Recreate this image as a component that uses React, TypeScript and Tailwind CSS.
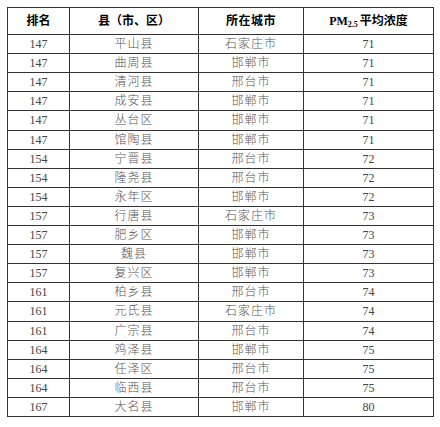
import React from "react";

const rows: [string, string, string, string][] = [
  ["147", "平山县", "石家庄市", "71"],
  ["147", "曲周县", "邯郸市", "71"],
  ["147", "清河县", "邢台市", "71"],
  ["147", "成安县", "邯郸市", "71"],
  ["147", "丛台区", "邯郸市", "71"],
  ["147", "馆陶县", "邯郸市", "71"],
  ["154", "宁晋县", "邢台市", "72"],
  ["154", "隆尧县", "邢台市", "72"],
  ["154", "永年区", "邯郸市", "72"],
  ["157", "行唐县", "石家庄市", "73"],
  ["157", "肥乡区", "邯郸市", "73"],
  ["157", "魏县", "邯郸市", "73"],
  ["157", "复兴区", "邯郸市", "73"],
  ["161", "柏乡县", "邢台市", "74"],
  ["161", "元氏县", "石家庄市", "74"],
  ["161", "广宗县", "邢台市", "74"],
  ["164", "鸡泽县", "邯郸市", "75"],
  ["164", "任泽区", "邢台市", "75"],
  ["164", "临西县", "邢台市", "75"],
  ["167", "大名县", "邯郸市", "80"],
];

const cell =
  "flex items-center justify-center border-r border-b border-[#333] leading-none";

export default function App() {
  return (
    <div
      className="w-[440px] h-[427px] bg-white pt-[7px] pl-[7px]"
      style={{ fontFamily: '"Liberation Serif", "Noto Sans CJK SC", serif' }}
    >
      <div className="grid grid-cols-[62px_129px_105px_130px] grid-rows-[27px_repeat(20,1fr)] h-[410px] w-[427px] border-l border-t border-[#333]">
        <div className={`${cell} text-[12px] font-bold text-black`}>排名</div>
        <div className={`${cell} text-[12px] font-bold text-black`}>县（市、区）</div>
        <div className={`${cell} text-[12px] font-bold text-black tracking-[0.5px]`}>所在城市</div>
        <div className={`${cell} text-[12px] font-bold text-black`}>
          <span>
            PM<sub className="text-[8px] align-baseline relative top-[2px]">2.5</sub>
          </span>
          <span className="ml-[2px]">平均浓度</span>
        </div>
        {rows.map((r, i) => (
          <React.Fragment key={i}>
            <div className={`${cell} text-[12px] text-[#444]`}>{r[0]}</div>
            <div className={`${cell} text-[12px] text-[#555] tracking-[1px] font-light`}>{r[1]}</div>
            <div className={`${cell} text-[12px] text-[#555] tracking-[1px] font-light`}>{r[2]}</div>
            <div className={`${cell} text-[12px] text-[#444]`}>{r[3]}</div>
          </React.Fragment>
        ))}
      </div>
    </div>
  );
}
